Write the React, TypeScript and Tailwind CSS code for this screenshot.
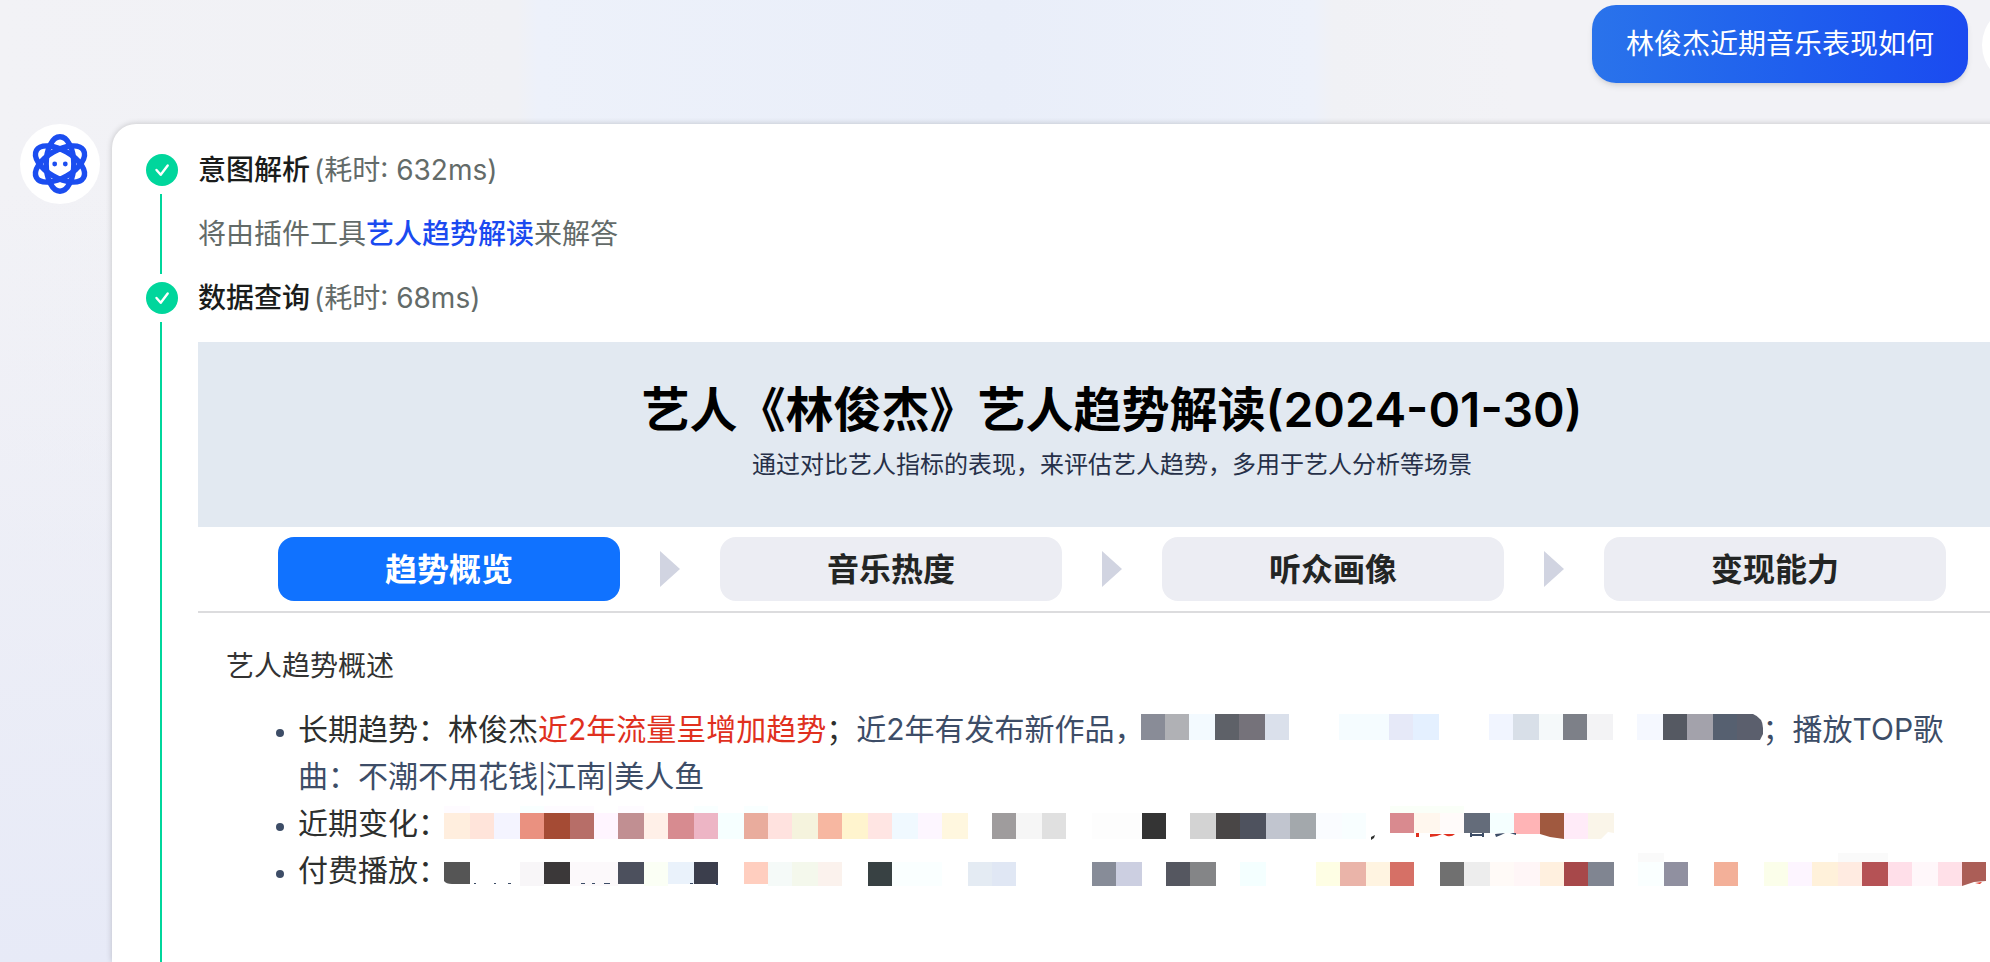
import React from "react";

type Cell = [x: number, w: number, color: string, h?: number];

function Mosaic({ width, top, size, cells, children }: { width: number; top: number; size: number; cells: Cell[]; children?: React.ReactNode }) {
  return (
    <svg width={width} height={40} viewBox={`0 2 ${width} 40`} shapeRendering="crispEdges" aria-hidden="true" className="-my-2 -ml-1 inline max-w-none align-middle">
      {cells.map(([x, w, color, h]) => (
        <rect key={x} x={x} y={top} width={w} height={h ?? size} fill={color} />
      ))}
      {children}
    </svg>
  );
}

const longTerm: Cell[] = [
  [0, 24, "#898c97"], [24, 24, "#b0b1b5"], [48, 26, "#f3faff"], [74, 24, "#5e6168"], [98, 26, "#75727a"], [124, 24, "#dae0eb"],
  [198, 50, "#f5fcff"], [248, 24, "#e6e9f8"], [272, 26, "#e4f0ff"], [348, 24, "#f1f5ff"], [372, 26, "#d8dfe8"], [398, 24, "#f5f9fa"],
  [422, 24, "#7d8088"], [446, 26, "#f3f3f5"], [496, 26, "#f5f8ff"], [522, 24, "#555962"], [546, 26, "#a3a2ab"], [572, 24, "#566070"],
];

const recent: Cell[] = [
  [0, 26, "#ffeede"], [26, 24, "#ffe4da"], [50, 26, "#f4f4ff"], [76, 24, "#ea9180"], [100, 26, "#a54b34"], [126, 24, "#b76e68"],
  [150, 24, "#fff5ff"], [174, 26, "#c18f92"], [200, 24, "#fff0e8"], [224, 26, "#d78b90"], [250, 24, "#edb5c5"], [274, 26, "#f6ffff"],
  [300, 24, "#e9ac9d"], [324, 24, "#ffe2df"], [348, 26, "#f5f3dd"], [374, 24, "#f7b7a1"], [398, 26, "#fff4ce"], [424, 24, "#ffe5e3"],
  [448, 26, "#f0f9ff"], [474, 24, "#fdf6ff"], [498, 26, "#fff7df"], [548, 24, "#9f9c9d"], [572, 26, "#f6f6f6"], [598, 24, "#e0e0e0"],
  [648, 48, "#fdfdfd"], [698, 24, "#343434"], [746, 26, "#d3d3d3"], [772, 24, "#494646"], [796, 26, "#4e525e"], [822, 24, "#c1c5cf"],
  [846, 26, "#a3a8ac"], [872, 26, "#fafcff"], [898, 24, "#f8feff"], [946, 24, "#d98a8f", 20], [970, 26, "#fff7ee", 20],
  [996, 24, "#fffbfa", 20], [1020, 26, "#646c7a", 20], [1046, 24, "#f5ffff", 20], [1070, 26, "#ffb4b6", 21], [1120, 24, "#ffebf8"],
];

const paid: Cell[] = [
  [76, 24, "#f8f6f8"], [100, 26, "#3b3839", 22], [126, 48, "#fcf9fb"], [174, 26, "#4c505d", 22], [200, 24, "#fbfff5"], [224, 26, "#eaf2fb", 22],
  [250, 24, "#3b3e4c", 22], [300, 24, "#ffcebf", 22], [324, 24, "#f5faf8"], [348, 26, "#f4f8ec"], [374, 24, "#fbf2ed"], [424, 24, "#384143"],
  [448, 50, "#faffff"], [524, 24, "#e4ebf3"], [548, 24, "#e0e7f4"], [648, 24, "#878c98"], [672, 26, "#cccfe1"], [722, 24, "#555760"],
  [746, 26, "#848587"], [796, 26, "#f4ffff"], [872, 24, "#fefee4"], [896, 26, "#eab4a9"], [922, 24, "#fff4e1"], [946, 24, "#d67066"],
  [996, 24, "#707070"], [1020, 26, "#ededed"], [1046, 24, "#fffaf7"], [1070, 26, "#fff6f7"], [1096, 24, "#fff0df"], [1120, 24, "#a7484a"],
  [1144, 26, "#808591"], [1194, 26, "#faffff"], [1220, 24, "#9090a0"], [1270, 24, "#f3b099"], [1320, 24, "#fbfeea"], [1344, 24, "#fdf5ff"],
  [1368, 26, "#fff1da"], [1394, 24, "#ffebe1"], [1418, 26, "#b55255"], [1444, 24, "#ffdfe9"], [1468, 26, "#fff7fa"], [1494, 24, "#ffe0e8"],
];

function AtomLogo() {
  return (
    <svg viewBox="0 0 60 60" className="h-15 w-15" aria-hidden="true">
      <g fill="none" stroke="#1b4df0" strokeWidth="5.4">
        <ellipse cx="30" cy="30" rx="13.8" ry="27.2" />
        <ellipse cx="30" cy="30" rx="13.8" ry="27.2" transform="rotate(60 30 30)" />
        <ellipse cx="30" cy="30" rx="13.8" ry="27.2" transform="rotate(120 30 30)" />
      </g>
      <circle cx="24.7" cy="30" r="2.4" fill="#1b4df0" />
      <circle cx="35.3" cy="30" r="2.4" fill="#1b4df0" />
    </svg>
  );
}

function Check() {
  return (
    <svg viewBox="0 0 32 32" className="h-8 w-8 shrink-0" aria-hidden="true">
      <circle cx="16" cy="16" r="16" fill="#00d69c" />
      <path d="m10.5 16 4.2 4.8 7-9.3" fill="none" stroke="#fff" strokeWidth="2.4" strokeLinecap="round" strokeLinejoin="round" />
    </svg>
  );
}

function Step({ title, time, children }: { title: string; time: string; children: React.ReactNode }) {
  return (
    <li className="group flex gap-5 last:grow">
      <div className="flex flex-col gap-2 pb-2 group-last:pb-0">
        <Check />
        <div className="ml-3.5 w-0.5 grow bg-[#00d69c]" />
      </div>
      <div className="min-w-0 grow">
        <h2 className="text-[28px] leading-8 text-[#636b69]">
          <span className="mr-1 font-medium text-[#1a1c1b]">{title}</span>({time})
        </h2>
        {children}
      </div>
    </li>
  );
}

const tabs = ["趋势概览", "音乐热度", "听众画像", "变现能力"];

export default function App() {
  return (
    <div className="flex min-h-screen flex-col overflow-hidden bg-[linear-gradient(to_bottom,transparent_20%,#e7eaf7_100%),linear-gradient(to_right,#f2f2f6_0%,#f0f1f5_26%,#edf1fa_27%,#e9eef9_50%,#edf1fa_66%,#f0f1f5_67%,#f2f2f6_76%)] font-['Inter','Noto_Sans_CJK_SC',sans-serif]">
      <header className="-mr-[72px] flex items-start justify-end gap-3.5 pt-[5px]">
        <div className="rounded-3xl bg-linear-to-r from-[#2a73eb] to-[#1b4af0] px-[34px] py-[18px] text-[28px] leading-[42px] text-white shadow-md">
          林俊杰近期音乐表现如何
        </div>
        <div className="h-20 w-20 rounded-full bg-white" />
      </header>
      <main className="-mr-[68px] mt-[39px] flex grow gap-3 pl-5">
        <div className="flex h-20 w-20 shrink-0 items-center justify-center rounded-full bg-white">
          <AtomLogo />
        </div>
        <section className="flex min-w-0 grow flex-col rounded-tl-3xl bg-white pt-[30px] pr-8 pl-[34px] shadow-[0_0_6px_rgba(0,0,0,0.2)]">
          <ol className="flex grow flex-col">
            <Step title="意图解析" time="耗时: 632ms">
              <p className="py-8 text-[28px] leading-8 text-[#636b69]">
                将由插件工具<a href="#plugin" className="font-medium text-[#1b4af0]">艺人趋势解读</a>来解答
              </p>
            </Step>
            <Step title="数据查询" time="耗时: 68ms">
              <div className="mt-7 bg-[#e2e9f1] pt-9 pb-[46px] text-center">
                <h1 className="text-[48px] leading-[64px] font-semibold text-black">艺人《林俊杰》艺人趋势解读(2024-01-30)</h1>
                <p className="mt-[7px] text-2xl leading-8 text-[#263048]">通过对比艺人指标的表现，来评估艺人趋势，多用于艺人分析等场景</p>
              </div>
              <nav className="flex items-center justify-between border-b-2 border-[#dcdcde] px-20 py-2.5">
                {tabs.map((tab, i) => (
                  <React.Fragment key={tab}>
                    {i > 0 && (
                      <svg viewBox="0 0 20 36" className="mx-10 h-9 w-5 shrink-0" aria-hidden="true">
                        <path d="M0 0 20 18 0 36z" fill="#d1d4e1" />
                      </svg>
                    )}
                    <button className={`h-16 flex-1 rounded-2xl pt-0.5 text-[32px] leading-10 font-bold ${i === 0 ? "bg-[#1072ff] text-white" : "bg-[#ecedf3] text-[#232524]"}`}>{tab}</button>
                  </React.Fragment>
                ))}
              </nav>
              <h3 className="mt-[33px] ml-7 text-[28px] leading-10 text-[#333]">艺人趋势概述</h3>
              <ul className="mt-5 mr-19 list-disc pl-25 text-[30px] leading-[47px] text-[#2d2f2e] marker:text-2xl marker:text-[#3d4d67]">
                <li>
                  长期趋势：林俊杰<span className="text-[#e0301e]">近2年流量呈增加趋势</span>；
                  <span className="text-[#3d4d67]">
                    近2年有发布新作品，
                    <Mosaic width={622} top={4} size={26} cells={longTerm}>
                      <path d="M596 4h16q10 4 10 14v6l-3 6h-23z" fill="#5b5f6d" shapeRendering="auto" />
                    </Mosaic>
                    ；播放TOP歌曲：<span className="font-['Noto_Sans_CJK_SC',sans-serif] leading-none">不潮不用花钱|江南|美人鱼</span>
                  </span>
                </li>
                <li className="whitespace-nowrap">
                  近期变化：
                  <Mosaic width={1170} top={9} size={26} cells={recent}>
                    <g shapeRendering="auto">
                      <path d="M0 0h26v9H0zM100 0h50v9h-50zM174 0h26v9h-26z" fill="#fefbff" />
                      <path d="M76 0h24v9H76zM250 0h24v9h-24zM300 0h24v9h-24z" fill="#f9ffff" />
                      <path d="M946 0h74v9h-74z" fill="#fafff8" />
                      <path d="M1096 9h24v26l-14-2-10-3z" fill="#a0593f" />
                      <path d="M1144 9h26v20l-6-1-7 7h-13z" fill="#faf5e9" />
                      <path d="m927 33 4-2-1 3-3 2z" fill="#2d2f2e" />
                      <path d="M972 29h3v4h-3zM986 30h12l-5 2-7 1zM999 30h12q-3 3-8 2z" fill="#e0301e" />
                      <path d="M1026 29h2v1h10v-1h2v4h-2v-1h-10v1h-2zM1051 30l10-1-4 2-5 2zM1066 29h6v2z" fill="#3d4d67" />
                    </g>
                  </Mosaic>
                </li>
                <li className="whitespace-nowrap">
                  付费播放：
                  <Mosaic width={1542} top={11} size={24} cells={paid}>
                    <g shapeRendering="auto">
                      <path d="M0 11h26v22H8q-6 0-8-3z" fill="#555" />
                      <path d="M1518 11h24v19l-12 1-12 4z" fill="#ab5e57" />
                      <path d="M1531 32l7-1-2 2z" fill="#e0301e" />
                      <path d="M1194 2h26v9h-26zM1394 2h50v9h-50z" fill="#fafafa" />
                      <path d="M30 32h2v1h-2zM50 32h2v1h-2zM64 32h3v1h-3zM137 32h4v1h-4zM148 32h3v1h-3zM160 32h6v1h-6zM246 32h3v1h-3zM272 32h2v2h-2z" fill="#3d4d67" />
                    </g>
                  </Mosaic>
                </li>
              </ul>
            </Step>
          </ol>
        </section>
      </main>
    </div>
  );
}
